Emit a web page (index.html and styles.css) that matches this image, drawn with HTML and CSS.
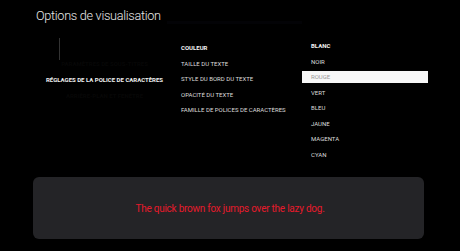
FILE: index.html
```html
<!DOCTYPE html>
<html lang="fr">
<head>
<meta charset="utf-8">
<link rel="stylesheet" href="styles.css">
</head>
<body>
<div class="screen">
  <header class="header">
    <h1 class="title">Options de visualisation</h1>
    <div class="title-ghost"></div>
  </header>
  <main class="panes">
    <section class="pane-left">
      <div class="scroll-mark"></div>
      <div class="left-item faint">PARAMÈTRES DE SOUS-TITRES</div>
      <div class="left-item active">RÉGLAGES DE LA POLICE DE CARACTÈRES</div>
      <div class="left-item faint">ARRIÈRE-PLAN ET FENÊTRE</div>
    </section>
    <section class="pane-mid">
      <ul class="list">
        <li class="row selected">COULEUR</li>
        <li class="row">TAILLE DU TEXTE</li>
        <li class="row">STYLE DU BORD DU TEXTE</li>
        <li class="row">OPACITÉ DU TEXTE</li>
        <li class="row">FAMILLE DE POLICES DE CARACTÈRES</li>
      </ul>
    </section>
    <section class="pane-right">
      <ul class="list options">
        <li class="opt selected">BLANC</li>
        <li class="opt">NOIR</li>
        <li class="opt focus">ROUGE</li>
        <li class="opt">VERT</li>
        <li class="opt">BLEU</li>
        <li class="opt">JAUNE</li>
        <li class="opt">MAGENTA</li>
        <li class="opt">CYAN</li>
      </ul>
    </section>
  </main>
  <div class="preview">
    <p class="sample">The quick brown fox jumps over the lazy dog.</p>
  </div>
</div>
</body>
</html>
```
FILE: styles.css
```css
html, body {
  margin: 0;
  padding: 0;
  background: #000;
}
body {
  width: 460px;
  height: 251px;
  overflow: hidden;
  font-family: Roboto, "Liberation Sans", sans-serif;
  color: #e6e6e6;
}
.screen {
  display: flex;
  flex-direction: column;
  height: 251px;
}
.header {
  display: flex;
  align-items: flex-end;
  gap: 6px;
  padding: 4px 0 0 36px;
  height: 22px;
}
.title {
  margin: 0;
  font-size: 12.7px;
  font-weight: 300;
  line-height: 20px;
  color: #e8e8e8;
  letter-spacing: -0.3px;
}
.title-ghost {
  width: 135px;
  height: 3px;
  margin-bottom: 2px;
  background: #030306;
}
.panes {
  display: grid;
  grid-template-columns: 181px 121px 126px;
  height: 142px;
}
.pane-left {
  display: flex;
  flex-direction: column;
  align-items: center;
  padding-top: 8px;
}
.scroll-mark {
  width: 1px;
  height: 22px;
  background: #333;
  margin: 4px 0 -4px -62px;
}
.left-item {
  font-size: 6px;
  font-weight: 700;
  line-height: 16px;
  white-space: nowrap;
  padding-left: 28px;
}
.left-item.faint {
  color: #070707;
}
.left-item.active {
  color: #f0f0f0;
}
.list {
  list-style: none;
  margin: 0;
  padding: 0;
}
.pane-mid .list {
  padding-top: 16px;
}
.row {
  font-size: 6px;
  line-height: 12px;
  margin-bottom: 3.5px;
  color: #dcdcdc;
  white-space: nowrap;
}
.row.selected, .opt.selected {
  font-weight: 700;
  color: #f4f4f4;
}
.pane-right .list {
  padding-top: 14px;
}
.opt {
  font-size: 6px;
  line-height: 12px;
  height: 12px;
  margin-bottom: 3.5px;
  padding-left: 9px;
  color: #dcdcdc;
}
.opt.focus {
  background: #f7f7f7;
  color: #9a9a9a;
}
.preview {
  margin: 9px 36px 0 33px;
  height: 62px;
  border-radius: 6px;
  background: #242427;
  display: flex;
  align-items: center;
  justify-content: center;
}
.sample {
  margin: 0;
  font-size: 10px;
  letter-spacing: -0.25px;
  color: #e61a2b;
  padding-left: 3px;
}
```
